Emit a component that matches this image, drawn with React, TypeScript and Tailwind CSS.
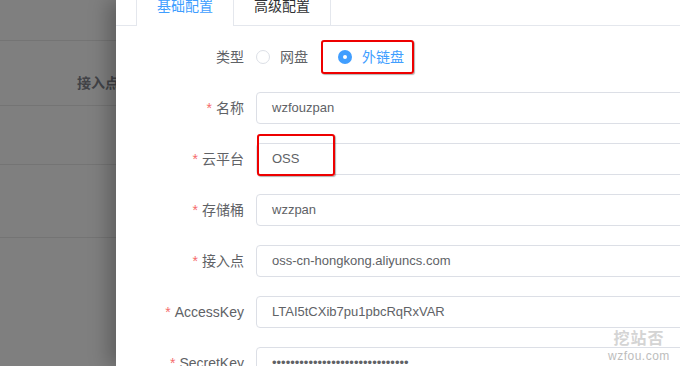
import React from "react";

const font = { fontFamily: '"Liberation Sans", Arial, "Noto Sans CJK SC", sans-serif' };

function Row({ label, required = true, children }: { label: string; required?: boolean; children: React.ReactNode }) {
  return (
    <div className="flex items-center h-[32px] mb-[19px]">
      <div className="w-[140px] shrink-0 pr-[12px] text-right text-[14px] leading-[32px] text-[#606266] whitespace-nowrap">
        {required && <span className="text-[#f56c6c] mr-[4px]">*</span>}
        {label}
      </div>
      {children}
    </div>
  );
}

function Input({ value, children }: { value: string; children?: React.ReactNode }) {
  return (
    <div className="relative shrink-0 w-[480px] h-[32px] border border-[#dcdfe6] rounded-[4px] bg-white flex items-center pl-[15px] text-[13px] text-[#606266] whitespace-nowrap">
      {value}
      {children}
    </div>
  );
}

export default function App() {
  return (
    <div className="w-[680px] h-[366px] overflow-hidden flex bg-white relative" style={font}>
      {/* dimmed background */}
      <div className="w-[116px] shrink-0 h-full bg-[#7f7f7f] overflow-hidden flex flex-col">
        <div className="h-[41px] border-b border-[#747474]" />
        <div className="h-[65px] border-b border-[#747474] pl-[77px] whitespace-nowrap">
          <div className="mt-[34px] text-[14px] leading-[16px] font-bold text-[#424347]">接入点</div>
        </div>
        <div className="h-[59px] border-b border-[#747474]" />
        <div className="h-[73px] border-b border-[#747474]" />
      </div>

      {/* drawer panel */}
      <div className="flex-1 h-full bg-white overflow-hidden shadow-[-8px_0_18px_rgba(0,0,0,0.25)] z-10">
        {/* tabs */}
        <div className="flex mt-[-15px] pl-[20px] border-b border-[#e4e7ed] h-[41px]">
          <div className="flex border border-b-0 border-[#e4e7ed] rounded-t-[4px] h-[41px]">
            <div className="w-[96px] h-[41px] leading-[40px] text-center text-[14px] text-[#409eff] bg-white border-b border-white">
              基础配置
            </div>
            <div className="w-[97px] h-[40px] leading-[40px] text-center text-[14px] text-[#303133] border-l border-[#e4e7ed]">
              高级配置
            </div>
          </div>
        </div>

        {/* form */}
        <div className="pt-[15px]">
          <Row label="类型" required={false}>
            <div className="flex items-center h-[32px] text-[14px]">
              <div className="flex items-center">
                <span className="w-[14px] h-[14px] rounded-full border border-[#dcdfe6] bg-white" />
                <span className="pl-[10px] text-[#606266]">网盘</span>
              </div>
              <div className="relative flex items-center h-[32px] ml-[30px]">
                <span className="w-[14px] h-[14px] rounded-full bg-[#409eff] flex items-center justify-center">
                  <span className="w-[4px] h-[4px] rounded-full bg-white" />
                </span>
                <span className="pl-[10px] text-[#409eff]">外链盘</span>
                <div className="absolute left-[-17px] top-[-1px] w-[93px] h-[34px] border-2 border-[#ee0000] rounded-[3px] shadow-[1px_1px_1px_rgba(0,0,0,0.3)]" />
              </div>
            </div>
          </Row>
          <Row label="名称">
            <Input value="wzfouzpan" />
          </Row>
          <Row label="云平台">
            <Input value="OSS">
              <div className="absolute left-[0px] top-[-10px] w-[78px] h-[42px] border-2 border-[#ee0000] rounded-[3px] shadow-[1px_1px_1px_rgba(0,0,0,0.3)]" />
            </Input>
          </Row>
          <Row label="存储桶">
            <Input value="wzzpan" />
          </Row>
          <Row label="接入点">
            <Input value="oss-cn-hongkong.aliyuncs.com" />
          </Row>
          <Row label="AccessKey">
            <Input value="LTAI5tCXib7pu1pbcRqRxVAR" />
          </Row>
          <Row label="SecretKey">
            <Input value={"•".repeat(30)} />
          </Row>
        </div>
      </div>

      {/* watermark */}
      <div className="absolute left-[608px] top-[329px] z-20 flex flex-col items-center leading-none select-none">
        <span className="text-[16px] font-bold text-[#d4d4d4] tracking-[1px]" style={{ fontFamily: '"Noto Sans CJK SC", sans-serif' }}>挖站否</span>
        <span className="mt-[5px] text-[12px] text-[#bdbdbd] tracking-[0.5px]">wzfou.com</span>
      </div>
    </div>
  );
}
